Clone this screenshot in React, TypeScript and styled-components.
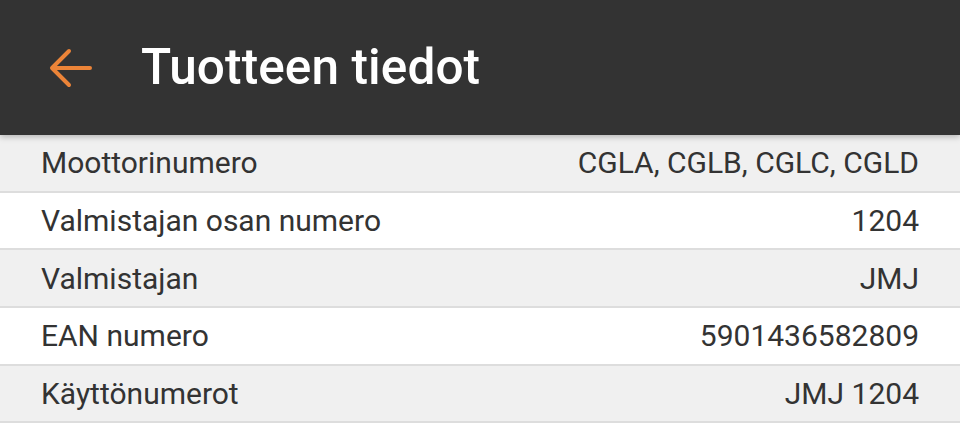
import React from 'react';
import styled, { createGlobalStyle } from 'styled-components';

const GlobalStyle = createGlobalStyle`
  html, body {
    margin: 0;
    padding: 0;
    background: #ffffff;
    font-family: Roboto, 'Noto Sans', sans-serif;
  }
`;

const Page = styled.div`
  width: 960px;
  height: 440px;
  overflow: hidden;
  background: #ffffff;
`;

const Toolbar = styled.header`
  position: relative;
  z-index: 1;
  height: 135px;
  display: flex;
  align-items: center;
  background: #333333;
  box-shadow: 0 2px 6px rgba(0, 0, 0, 0.25);
`;

const BackButton = styled.button`
  width: 44px;
  height: 44px;
  margin-left: 49px;
  padding: 0;
  border: none;
  background: none;
  display: flex;
  align-items: center;
  justify-content: center;
  cursor: pointer;
`;

const Title = styled.h1`
  margin: 0 0 2px 48px;
  color: #ffffff;
  font-size: 49.5px;
  font-weight: 500;
  letter-spacing: 0.1px;
`;

const InfoList = styled.ul`
  margin: 0;
  padding: 0;
  list-style: none;
`;

const InfoRow = styled.li<{ $odd: boolean }>`
  height: 55.7px;
  box-sizing: content-box;
  display: flex;
  align-items: center;
  justify-content: space-between;
  padding: 0 41px;
  background: ${p => (p.$odd ? '#f0f0f0' : '#ffffff')};
  border-bottom: 2px solid #dddddd;
  color: #333333;
  font-size: 30px;
`;

const Label = styled.span`
  white-space: nowrap;
`;

const Value = styled.span`
  white-space: nowrap;
  text-align: right;
`;

const rows: [string, string][] = [
  ['Moottorinumero', 'CGLA, CGLB, CGLC, CGLD'],
  ['Valmistajan osan numero', '1204'],
  ['Valmistajan', 'JMJ'],
  ['EAN numero', '5901436582809'],
  ['Käyttönumerot', 'JMJ 1204'],
];

function BackArrow() {
  return (
    <svg width='44' height='44' viewBox='0 0 44 44' fill='none'>
      <path
        d='M4 22H41M20 5L3 22L20 39'
        stroke='#ec8438'
        strokeWidth='4'
        strokeLinecap='round'
        strokeLinejoin='round'
      />
    </svg>
  );
}

export default function App() {
  return (
    <Page>
      <GlobalStyle />
      <Toolbar>
        <BackButton aria-label='Takaisin'>
          <BackArrow />
        </BackButton>
        <Title>Tuotteen tiedot</Title>
      </Toolbar>
      <InfoList>
        {rows.map(([label, value], i) => (
          <InfoRow key={label} $odd={i % 2 === 0}>
            <Label>{label}</Label>
            <Value>{value}</Value>
          </InfoRow>
        ))}
      </InfoList>
    </Page>
  );
}
